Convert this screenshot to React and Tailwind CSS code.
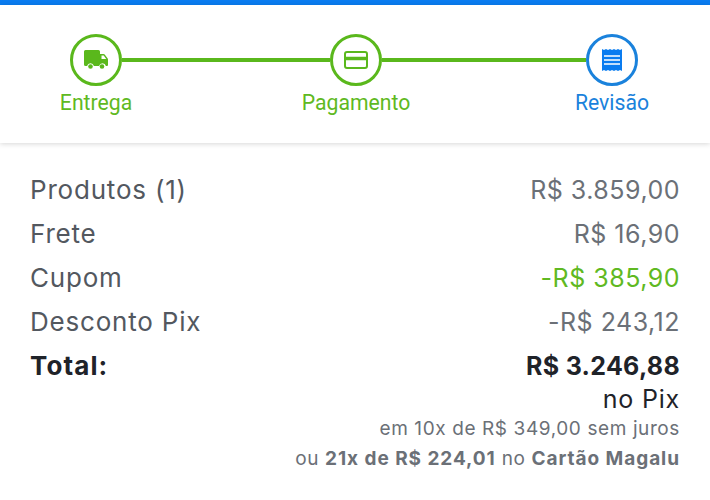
const green = '#5ab81c';

function Step({ label, color, children }) {
  return (
    <div className="flex flex-col items-center w-[52px] shrink-0">
      <div className={`flex items-center justify-center w-[52px] h-[52px] rounded-full border-[3px] bg-white ${color}`}>
        {children}
      </div>
      <span className={`mt-[1px] whitespace-nowrap text-[21.200px] leading-[32px] font-['Roboto',sans-serif] ${color}`}>{label}</span>
    </div>
  );
}

function Row({ label, value, valueClass = 'text-[#6b7077] tracking-[0.5px]', labelClass = 'text-[#53585f] text-[26px] tracking-[0.8px]' }) {
  return (
    <div className="flex items-baseline justify-between h-[44px] leading-[44px]">
      <span className={labelClass}>{label}</span>
      <span className={valueClass}>{value}</span>
    </div>
  );
}

export default function App() {
  return (
    <div className="w-[710px] h-[500px] overflow-hidden bg-white font-['Inter',sans-serif]">
      <div className="h-[5px] bg-[#0a7cf0]" />
      <header className="h-[138px] pt-[29px] pl-[70px] bg-white shadow-[0_1px_5px_rgba(0,0,0,0.16)]">
        <div className="flex items-start">
          <Step label="Entrega" color="text-[#5fb922] border-[#5ab81c]">
            <svg width="24" height="20" viewBox="0 0 24 20" fill={green}>
              <path d="M1.500 0h13A1.500 1.500 0 0 1 16 1.500V4h3.500c.5 0 .9.2 1.200.6l3 4c.2.300.3.600.3.900V15a1 1 0 0 1-1 1h-1.100a3.500 3.500 0 0 0-6.800 0H9.900a3.500 3.500 0 0 0-6.800 0H1.500A1.500 1.500 0 0 1 0 14.500v-13A1.500 1.500 0 0 1 1.500 0zM17.500 5.500V9h4.700l-2.500-3.500z" />
              <circle cx="6.500" cy="16.500" r="2.300" />
              <circle cx="18" cy="16.500" r="2.300" />
            </svg>
          </Step>
          <div className="w-[208px] h-[4px] mt-[24px] bg-[#5ab81c] shrink-0" />
          <Step label="Pagamento" color="text-[#5fb922] border-[#5ab81c]">
            <svg width="24" height="18" viewBox="0 0 24 18" fill="none" stroke={green} strokeWidth="2">
              <rect x="1" y="1" width="22" height="16" rx="2" />
              <path d="M1 7.500h22" strokeWidth="3.500" />
            </svg>
          </Step>
          <div className="w-[204px] h-[4px] mt-[24px] bg-[#5ab81c] shrink-0" />
          <Step label="Revisão" color="text-[#1a82dc] border-[#1a82dc]">
            <svg width="20" height="22" viewBox="0 0 20 22">
              <path
                fill="#0a7cf0"
                d="M0 0l2 1 2-1 2 1 2-1 2 1 2-1 2 1 2-1 2 1 2-1v22l-2-1-2 1-2-1-2 1-2-1-2 1-2-1-2 1-2-1-2 1z"
              />
              <path d="M2 7h16M2 11h16M2 15h16" stroke="#fff" strokeWidth="1.500" />
            </svg>
          </Step>
        </div>
      </header>
      <section className="px-[30px] pt-[25px] text-[25px]">
        <Row label="Produtos (1)" value="R$ 3.859,00" />
        <Row label="Frete" value="R$ 16,90" />
        <Row label="Cupom" value="-R$ 385,90" valueClass="text-[#5fb922] tracking-[0.5px]" />
        <Row label="Desconto Pix" value="-R$ 243,12" />
        <Row
          label="Total:"
          value="R$ 3.246,88"
          labelClass="font-bold text-[#1f2329] text-[26px] tracking-[1.100px]"
          valueClass="font-bold text-[#1f2329] tracking-[0.3px]"
        />
        <div className="flex flex-col items-end -mt-[5px]">
          <span className="text-[#1f2329] leading-[32px] tracking-[0.8px]">no Pix</span>
          <span className="text-[19px] leading-[28px] tracking-[0.6px] text-[#6b7077]">em 10x de R$ 349,00 sem juros</span>
          <span className="mt-[2px] text-[19px] leading-[28px] tracking-[0.6px] text-[#6b7077]">
            ou <b className="font-bold tracking-[0.95px]">21x de R$ 224,01</b> no <b className="font-bold tracking-[0.95px]">Cartão Magalu</b>
          </span>
        </div>
      </section>
    </div>
  );
}
